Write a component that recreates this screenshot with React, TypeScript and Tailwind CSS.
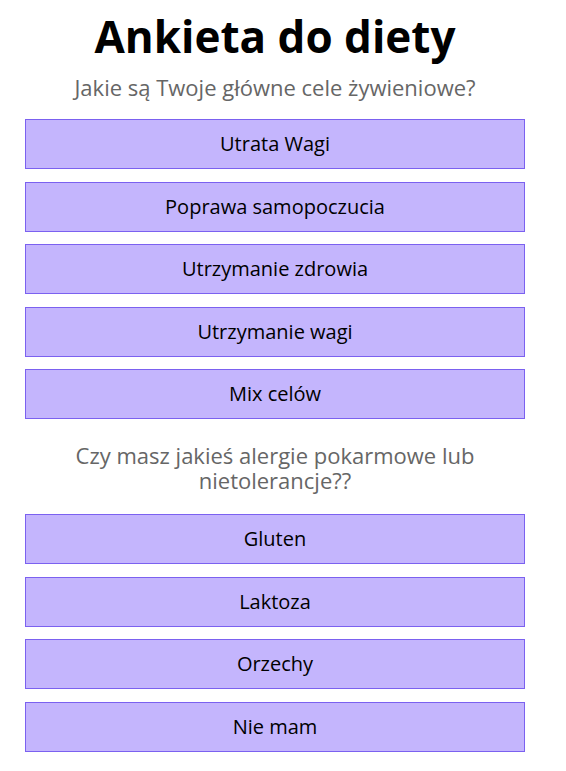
import React from 'react';

const goals = [
  'Utrata Wagi',
  'Poprawa samopoczucia',
  'Utrzymanie zdrowia',
  'Utrzymanie wagi',
  'Mix celów',
];

const allergies = ['Gluten', 'Laktoza', 'Orzechy', 'Nie mam'];

const OptionButton: React.FC<{ label: string }> = ({ label }) => (
  <button
    type="button"
    className="h-[50px] w-[500px] border border-[#7b61f0] bg-[#c4b5fd] text-[20px] text-black"
  >
    {label}
  </button>
);

const App: React.FC = () => {
  return (
    <div className="w-[550px] bg-white font-['Open_Sans',sans-serif]">
      <div className="flex flex-col items-center">
        <h1 className="pt-[6px] text-[44px] font-bold leading-[60px] text-black">
          Ankieta do diety
        </h1>
        <p className="mt-[6px] text-[22px] leading-[30px] text-[#666666]">
          Jakie są Twoje główne cele żywieniowe?
        </p>
        <div className="mt-[17px] flex flex-col gap-[12.5px]">
          {goals.map((goal) => (
            <OptionButton key={goal} label={goal} />
          ))}
        </div>
        <p className="mt-[24px] w-[420px] text-center text-[22px] leading-[25px] text-[#666666]">
          Czy masz jakieś alergie pokarmowe lub nietolerancje??
        </p>
        <div className="mt-[21px] flex flex-col gap-[12.5px]">
          {allergies.map((item) => (
            <OptionButton key={item} label={item} />
          ))}
        </div>
      </div>
    </div>
  );
};

export default App;
